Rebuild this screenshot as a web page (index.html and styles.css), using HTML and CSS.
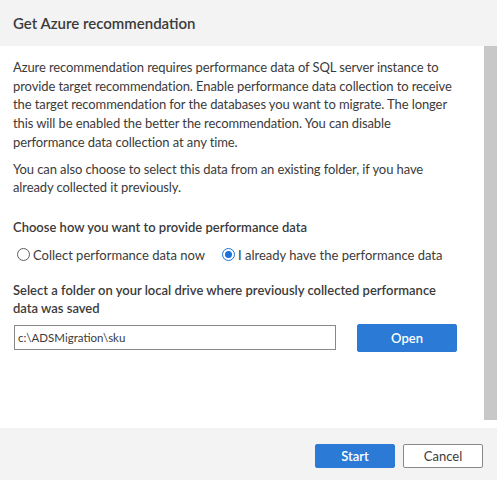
FILE: index.html
```html
<!DOCTYPE html>
<html>
<head>
<meta charset="utf-8">
<link rel="stylesheet" href="styles.css">
</head>
<body>
<div class="dialog">
  <div class="header">Get Azure recommendation</div>
  <div class="main">
    <div class="content">
      <p class="para">Azure recommendation requires performance data of SQL server instance to provide target recommendation. Enable performance data collection to receive the target recommendation for the databases you want to migrate. The longer this will be enabled the better the recommendation. You can disable performance data collection at any time.</p>
      <p class="para para2">You can also choose to select this data from an existing folder, if you have already collected it previously.</p>
      <div class="label choose">Choose how you want to provide performance data</div>
      <div class="radios">
        <label class="radio"><span class="circle"></span>Collect performance data now</label>
        <label class="radio"><span class="circle checked"></span>I already have the performance data</label>
      </div>
      <div class="label select">Select a folder on your local drive where previously collected performance data was saved</div>
      <div class="folder-row">
        <div class="input">c:\ADSMigration\sku</div>
        <button class="btn primary open">Open</button>
      </div>
    </div>
    <div class="scrollbar"></div>
  </div>
  <div class="footer">
    <button class="btn primary">Start</button>
    <button class="btn secondary">Cancel</button>
  </div>
</div>
</body>
</html>
```
FILE: styles.css
```css
* { box-sizing: border-box; }
html, body { margin: 0; padding: 0; }
body {
  width: 497px;
  height: 480px;
  overflow: hidden;
  font-family: "Lato", "Noto Sans", sans-serif;
  color: #3b3b3b;
  background: #fff;
}
.dialog {
  display: flex;
  flex-direction: column;
  height: 480px;
}
.header {
  height: 46px;
  background: #f3f3f3;
  padding-left: 13px;
  display: flex;
  align-items: center;
  font-size: 15px;
  font-weight: 600;
  color: #3b3b3b;
}
.main {
  height: 382px;
  display: flex;
  background: #fff;
}
.content {
  flex: 1;
  padding: 12px 0 0 13px;
}
.scrollbar {
  width: 13px;
  background: #c8c8c8;
  margin-bottom: 8px;
}
.para {
  margin: 0;
  width: 447px;
  font-size: 13px;
  letter-spacing: -0.1px;
  line-height: 18.7px;
}
.para2 {
  margin-top: 8px;
}
.label {
  font-size: 13px;
  font-weight: 600;
  line-height: 18px;
}
.choose {
  margin-top: 21px;
}
.radios {
  display: flex;
  gap: 17px;
  margin-top: 10px;
  padding-left: 4px;
  font-size: 13px;
  line-height: 18px;
}
.radio {
  display: flex;
  align-items: center;
  gap: 3px;
}
.circle {
  width: 13px;
  height: 13px;
  border-radius: 50%;
  border: 1px solid #5e5e5e;
  display: inline-block;
  position: relative;
}
.circle.checked {
  border-color: #1a73d9;
}
.circle.checked::after {
  content: "";
  position: absolute;
  left: 2px; top: 2px;
  width: 7px; height: 7px;
  border-radius: 50%;
  background: #1a73d9;
}
.select {
  margin-top: 17px;
  width: 446px;
}
.folder-row {
  display: flex;
  align-items: center;
  gap: 21px;
  margin-top: 7px;
  padding-left: 1px;
}
.input {
  width: 322px;
  height: 25px;
  border: 1px solid #8a8886;
  font-size: 11.5px;
  line-height: 23px;
  padding-left: 3px;
  color: #3b3b3b;
}
.btn {
  font-family: inherit;
  font-size: 13px;
  font-weight: 600;
  border-radius: 2px;
  padding: 0;
  cursor: pointer;
}
.primary {
  background: #2b7bd6;
  border: 1px solid #2b7bd6;
  color: #fff;
}
.open {
  width: 100px;
  height: 28px;
}
.footer {
  flex: 1;
  background: #f3f3f3;
  display: flex;
  justify-content: flex-end;
  align-items: flex-start;
  gap: 8px;
  padding: 16px 14px 0 0;
}
.footer .btn {
  width: 80px;
  height: 24px;
}
.secondary {
  background: #fff;
  border: 1px solid #8a8886;
  color: #3b3b3b;
  font-weight: 400;
}
```
